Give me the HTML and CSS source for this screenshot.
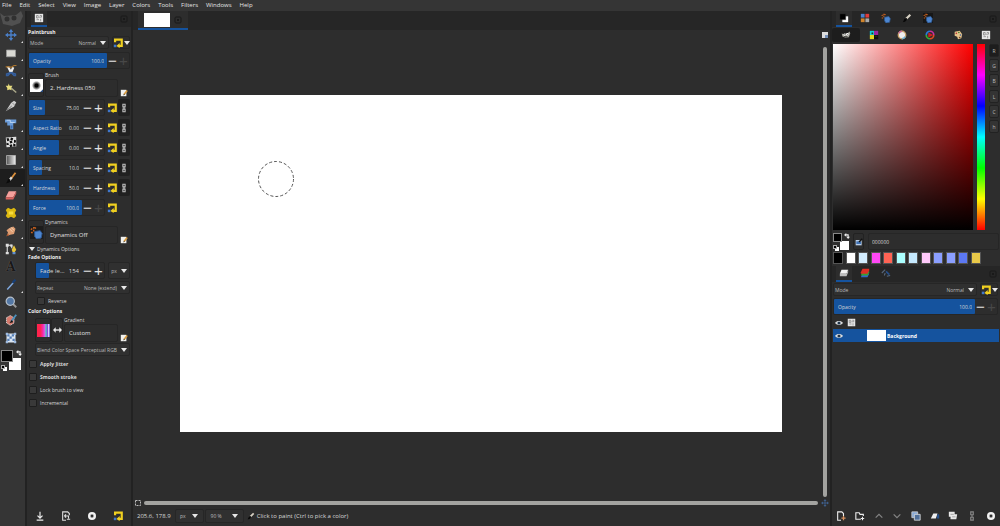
FILE: index.html
```html
<!DOCTYPE html>
<html lang="en">

<head>
    <meta charset="UTF-8">
    <meta name="viewport" content="width=device-width, initial-scale=1.0">
    <title>Image Editor</title>
    <link rel="stylesheet" href="styles.css">
</head>

<body>
    <!-- Icon sprite -->
    <svg class="sprite" aria-hidden="true">
        <defs>
            <linearGradient id="grayFade"><stop offset="0" stop-color="#555"/><stop offset="1" stop-color="#eee"/></linearGradient>
            <radialGradient id="softDot"><stop offset=".3" stop-color="#000"/><stop offset="1" stop-color="#fff"/></radialGradient>
        </defs>
        <symbol id="move" viewBox="0 0 16 16"><path d="M8 2v12M2 8h12" stroke="#4a7fc8" stroke-width="1.8"/><path d="M8 0l3 4H5zM8 16l3-4H5zM0 8l4-3v6zM16 8l-4-3v6z" fill="#4a7fc8"/></symbol>
        <symbol id="rect" viewBox="0 0 16 16"><path d="M2 4h12v9H2z" fill="#d9d9d4" stroke="#999"/></symbol>
        <symbol id="scissors" viewBox="0 0 16 16"><path d="M4 2l4 8M11 3L8 10" stroke="#eee" stroke-width="3"/><path d="M1 3c3-3 6 2 9-1s4 0 5-2" stroke="#a9742e" stroke-width="1.5" fill="none"/><path d="M8 10l-4 4H2v-2zM8 10l4 4h2v-2z" fill="none" stroke="#355f9e" stroke-width="1.8"/></symbol>
        <symbol id="wand" viewBox="0 0 16 16"><path d="M7 7l8 7" stroke="#aaa88a" stroke-width="2"/><path d="M5 2l1 3 4 0-2 3 1 3-3-1-3 1 0-3-2-3 3 0z" fill="#e8dc7c"/></symbol>
        <symbol id="crop" viewBox="0 0 16 16"><path d="M1 15L8 4l4-3 3 2-3 6-6 3z" fill="#d0d0d0"/><path d="M2 14l7-6" stroke="#555"/><path d="M10 4l3 3" stroke="#777"/></symbol>
        <symbol id="transform" viewBox="0 0 16 16"><path d="M0 2h15v5h-4v8H7v-5H3V6H0z" fill="#6b9bd8"/><path d="M2 3h5v3h6" stroke="#cfe1f7" fill="none"/><path d="M8 10h2v4H8z" fill="#3b6cb0"/></symbol>
        <symbol id="warp" viewBox="0 0 16 16"><path d="M1 2l14-1v13L2 15z" fill="#ddd"/><path d="M2 3h3l1 3-3 1zM8 2l3 1-1 3-3-1zM6 7l3-1 1 3-3 1zM12 5l3 1-1 3h-2zM2 9l3 1 0 2-3 0zM6 12l3-1 1 3-3 1zM11 10l3 1v3h-3z" fill="#111"/></symbol>
        <symbol id="gradient" viewBox="0 0 16 16"><path d="M2 2h12v12H2z" fill="url(#grayFade)" stroke="#bbb"/></symbol>
        <symbol id="brush" viewBox="0 0 16 16"><path d="M14 1L8 9" stroke="#d98e3c" stroke-width="2.4"/><path d="M9 7L6 11" stroke="#ddd" stroke-width="3"/><path d="M7 10c1 4-3 5-6 5 3-2 2-5 4-6z" fill="#0b0b0b"/></symbol>
        <symbol id="eraser" viewBox="0 0 16 16"><path d="M5 3h10l-4 8H1z" fill="#f5a09c"/><path d="M1 11h10l4-8v3l-4 8H1z" fill="#d9635f"/></symbol>
        <symbol id="heal" viewBox="0 0 16 16"><path d="M4 1l4 2 4-2 3 3-2 4 2 4-3 3-4-2-4 2-3-3 2-4-2-4z" fill="#dcb810"/><path d="M5 6h6v4H5z" fill="#f7dc3c"/></symbol>
        <symbol id="smudge" viewBox="0 0 16 16"><path d="M2 15l2-5-2-3 4-3 5-2 3 3-2 7-5 1z" fill="#dd9d73"/><path d="M6 5l4 4M8 3l4 4" stroke="#fae0c5"/><path d="M2 15l2-4 1 3z" fill="#a2471d"/></symbol>
        <symbol id="path" viewBox="0 0 16 16"><path d="M3 14V3h6v4" stroke="#ddd" stroke-width="1.5" fill="none"/><path d="M1 12h4v3H1zM1 1h4v4H1zM7 2h3v3H7z" fill="#ddd"/><path d="M12 3l3 6-2 3h-3L9 9z" fill="#e9c63a"/><path d="M10 12h4v3h-4z" fill="#6391cf"/></symbol>
        <symbol id="picker" viewBox="0 0 16 16"><path d="M3 14L11 5" stroke="#7fa8dd" stroke-width="2"/><path d="M10 5l4-4" stroke="#173f78" stroke-width="3"/></symbol>
        <symbol id="zoomTool" viewBox="0 0 16 16"><path d="M10 10l5 5" stroke="#999" stroke-width="2.4"/><circle cx="7" cy="7" r="5.5" fill="#5478a5" stroke="#b7c0cb" stroke-width="1.6"/></symbol>
        <symbol id="fgSelect" viewBox="0 0 16 16"><path d="M2 5l5-3 5 3 0 7-5 3-5-3z" fill="#d67a6d" stroke="#eee" stroke-dasharray="2 1"/><path d="M15 1L8 10" stroke="#4b90bd" stroke-width="2.5"/><path d="M6 12l3-4 2 3z" fill="#111"/></symbol>
        <symbol id="unified" viewBox="0 0 16 16"><path d="M2 2h12v12H2z" fill="#dbe6f3"/><path d="M3 3h3v3H3zM9 3h3v3H9zM6 6h3v3H6zM3 9h3v3H3zM10 9h3v3h-3z" fill="#557fb8"/><path d="M1 1h3v3H1zM12 1h3v3h-3zM1 12h3v3H1zM12 12h3v3h-3z" fill="#9fbbe0"/></symbol>
        <symbol id="swap" viewBox="0 0 8 8"><path d="M2 2.5h3.5V6" stroke="#eee" stroke-width="1.5" fill="none"/><path d="M0 2.5L3 0v5zM5.500 8L3 5h5z" fill="#eee"/></symbol>
        <symbol id="options" viewBox="0 0 12 12"><path d="M1 1h10v10H1z" fill="#e6e6e6"/><path d="M3 3h2v3H3zM7 3h2v2M3 8h3M8 7v3M6 5h3" stroke="#888" fill="none"/></symbol>
        <symbol id="close" viewBox="0 0 8 8"><rect x="1" y="1" width="6" height="6" rx="1" fill="none" stroke="#191919"/><path d="M3 3h2v2H3z" fill="#191919"/></symbol>
        <symbol id="reset" viewBox="0 0 12 12"><path d="M2.500 5V2h8v7.500H7" stroke="#f0d020" stroke-width="2.600" fill="none"/><path d="M8 6v6L4 9.500z" fill="#f0d020"/><path d="M1 8h3v3H1z" fill="#3f78cc"/></symbol>
        <symbol id="chain" viewBox="0 0 8 12"><path d="M2.500 1h3v3.500h-3zM2.500 7.500h3V11h-3zM4 4v4" stroke="#c4c4c4" stroke-width="1.400" fill="none"/></symbol>
        <symbol id="edit" viewBox="0 0 10 10"><path d="M1 1h7v8H1z" fill="#f1f1ee"/><path d="M9 2L5 7" stroke="#d99a3c" stroke-width="2"/><path d="M4 8l1-2 1 1z" fill="#222"/></symbol>
        <symbol id="softBrush" viewBox="0 0 14 14"><path d="M0 0h14v14H0z" fill="#fff"/><circle cx="7" cy="7" r="5" fill="url(#softDot)"/><path d="M14 11v3h-3z" fill="#25477c"/></symbol>
        <symbol id="dynamics" viewBox="0 0 14 14"><path d="M1 4l2-2M4 6V1l3 2M1 7h3" stroke="#c6601f" stroke-width="1.500" stroke-dasharray="2 1" fill="none"/><path d="M5 6l6-1 2 3-1 5-5 1-2-3z" fill="#4d86d0" stroke="#2f5a96"/></symbol>
        <symbol id="leftRight" viewBox="0 0 10 8"><path d="M2 4h6" stroke="#eee" stroke-width="1.500"/><path d="M0 4l3-3v6zM10 4L7 1v6z" fill="#eee"/></symbol>
        <symbol id="save" viewBox="0 0 12 12"><path d="M6 1v7M2 11h8M3 5.500l3 3 3-3" stroke="#eee" stroke-width="1.400" fill="none"/></symbol>
        <symbol id="restore" viewBox="0 0 12 12"><path d="M10 5V3L8 1H2v10h4M4 6h5v3M4 6l2-2M4 6l2 2M7 10h4" stroke="#ddd" stroke-width="1.300" fill="none"/></symbol>
        <symbol id="delete" viewBox="0 0 12 12"><circle cx="6" cy="6" r="4.800" fill="#f2f2f2"/><path d="M4.500 4.500l3 3M7.500 4.500l-3 3" stroke="#2b2b2b" stroke-width="1.500"/></symbol>
        <symbol id="quickmask" viewBox="0 0 8 8"><path d="M1.500 1.500h5v5h-5z" fill="none" stroke="#bbb" stroke-dasharray="2 1"/></symbol>
        <symbol id="corner" viewBox="0 0 8 8"><path d="M1 1h6v6H1z" fill="#ddd"/><path d="M4 4h3v3H4z" fill="#7590b8"/></symbol>
        <symbol id="colors" viewBox="0 0 12 12"><path d="M4 4h7v7H4z" fill="#fff"/><path d="M1 1h7v7H1z" fill="#000" stroke="#333" stroke-width=".5"/></symbol>
        <symbol id="palette" viewBox="0 0 12 12"><path d="M1 1h4.500v4.500H1z" fill="#4b82ce"/><path d="M6.500 1H11v4.500H6.500z" fill="#dd3b3b"/><path d="M1 6.500h4.500V11H1z" fill="#d0842b"/><path d="M6.500 6.500H11V11H6.500z" fill="#a9a9a9"/></symbol>
        <symbol id="inkBrush" viewBox="0 0 12 12"><path d="M10 2L5 7" stroke="#d8d2c4" stroke-width="2.600"/><path d="M6 6c0 4-3 5-5 5l2-4z" fill="#080808"/></symbol>
        <symbol id="wilber" viewBox="0 0 14 10"><path d="M1 3l3 1 6-2 2-2 1 3-2 5-5 1-4-2z" fill="#a4a49c"/><circle cx="5" cy="4.500" r="1.500" fill="#fff"/><circle cx="9" cy="4" r="1.700" fill="#fff"/><path d="M5 4h1v1H5zM9 4h1v1H9zM4 7h5v1H4z" fill="#111"/></symbol>
        <symbol id="cmyk" viewBox="0 0 12 12"><path d="M1 1h5v5H1z" fill="#16c7d8"/><path d="M6 1h5v5H6z" fill="#9a25a0"/><path d="M1 6h5v5H1z" fill="#e0d81c"/><path d="M6 6h5v5H6z" fill="#111"/><path d="M3 3h2v2H3zM7 7h3v1H7z" fill="#173d20"/></symbol>
        <symbol id="watercolor" viewBox="0 0 12 12"><circle cx="6" cy="6" r="4.500" fill="#eee" stroke="#c9a268" stroke-width="1.600"/><path d="M2 4a4.500 4.500 0 0 1 4-2.500" stroke="#c66c9a" stroke-width="1.600" fill="none"/><path d="M10 8a4.500 4.500 0 0 1-4 2.500" stroke="#6aaed0" stroke-width="1.600" fill="none"/></symbol>
        <symbol id="wheel" viewBox="0 0 12 12"><g fill="none" stroke-width="2"><path d="M6 1.500A4.500 4.500 0 0 1 10.500 6" stroke="#c92ea0"/><path d="M10.500 6A4.500 4.500 0 0 1 6 10.500" stroke="#e34b20"/><path d="M6 10.500A4.500 4.500 0 0 1 1.500 6" stroke="#36ae34"/><path d="M1.500 6A4.500 4.500 0 0 1 6 1.500" stroke="#2a78d8"/></g><path d="M4 3l6 3-6 3z" fill="#d12222"/></symbol>
        <symbol id="paints" viewBox="0 0 12 12"><path d="M2 2l6-1 3 4-1 5-4 1-1-3-3-1z" fill="#e5c48b"/><circle cx="4" cy="4" r="1" fill="#b83030"/><circle cx="7" cy="3" r="1" fill="#487a2e"/><circle cx="9" cy="6" r="1" fill="#3a5fa0"/><circle cx="8" cy="9" r="1" fill="#7b3f1f"/></symbol>
        <symbol id="layers" viewBox="0 0 12 12"><path d="M3 2h8l-2 5H1z" fill="#f2f2f2"/><path d="M1 7h8l2-5v3L9 10H1z" fill="#bdbdbd"/></symbol>
        <symbol id="channels" viewBox="0 0 12 12"><path d="M3 7h8l-2 4H1z" fill="#3267c5"/><path d="M3 4h8v2L9 9H1z" fill="#38a030"/><path d="M3 1h8v2L9 7H1V5z" fill="#df2e25"/></symbol>
        <symbol id="paths" viewBox="0 0 12 12"><path d="M1 6l4-4M4 9l1-3M7 10l4-1" stroke="#58687c" stroke-width="1.300" fill="none"/><path d="M6 4l4 4" stroke="#264f8b" stroke-width="2"/></symbol>
        <symbol id="toPalette" viewBox="0 0 12 12"><path d="M1 3h9v8H1z" fill="#b9cde6"/><path d="M2 5h7v4H2z" fill="#3f72b5"/><path d="M11 1L6 6" stroke="#111" stroke-width="2"/></symbol>
        <symbol id="eye" viewBox="0 0 12 8"><path d="M0 4c3-4 9-4 12 0-3 4-9 4-12 0z" fill="#dedede"/><circle cx="6" cy="4" r="2.400" fill="#34516f"/><circle cx="6" cy="4" r="1" fill="#000"/></symbol>
        <symbol id="newLayer" viewBox="0 0 12 12"><path d="M9 6V3L7 1H2v10h4" stroke="#eee" stroke-width="1.300" fill="none"/><path d="M9 6v5M6.500 8.500h5" stroke="#d7925f" stroke-width="1.500"/></symbol>
        <symbol id="newGroup" viewBox="0 0 12 12"><path d="M7 10H1V2h4l1 2h4v2M9 7v4M7 9h4" stroke="#eee" stroke-width="1.300" fill="none"/></symbol>
        <symbol id="raise" viewBox="0 0 12 12"><path d="M2 8l4-4 4 4" stroke="#858585" stroke-width="1.400" fill="none"/></symbol>
        <symbol id="lower" viewBox="0 0 12 12"><path d="M2 4l4 4 4-4" stroke="#858585" stroke-width="1.400" fill="none"/></symbol>
        <symbol id="duplicate" viewBox="0 0 12 12"><path d="M1 1h7v7H1z" fill="#87a9d6" stroke="#ccc"/><path d="M4 4h7v7H4z" fill="#506f99" stroke="#ddd"/></symbol>
        <symbol id="merge" viewBox="0 0 12 12"><path d="M4 3h5L7 9H1z" fill="#eee"/><path d="M9 4h2v5H8z" fill="#244f8c"/></symbol>
        <symbol id="mask" viewBox="0 0 12 12"><path d="M1 1h7v3h3l-1 6H3V7H1z" fill="#e8e8e8"/><path d="M3 4h4M5 7h4" stroke="#999"/></symbol>
    </svg>

    <nav class="menubar">
        <a href="#">File</a><a href="#">Edit</a><a href="#">Select</a><a href="#">View</a><a href="#">Image</a><a href="#">Layer</a><a href="#">Colors</a><a href="#">Tools</a><a href="#">Filters</a><a href="#">Windows</a><a href="#">Help</a>
    </nav>

    <main class="workspace">
        <!-- Toolbox -->
        <aside class="toolbox">
            <svg class="mascot" viewBox="0 0 24 15"><path d="M0 2l4 3 12-1 5-4 2 5-3 7-8 3-9-2z" fill="#505050"/><circle cx="7" cy="8" r="2.500" fill="#303030"/><circle cx="14" cy="7" r="2.500" fill="#303030"/></svg>
            <div class="tools">
                <button class="tool more" aria-label="Move"><svg><use href="#move"/></svg></button>
                <button class="tool more" aria-label="Rectangle Select"><svg><use href="#rect"/></svg></button>
                <button class="tool more" aria-label="Scissors Select"><svg><use href="#scissors"/></svg></button>
                <button class="tool more" aria-label="Fuzzy Select"><svg><use href="#wand"/></svg></button>
                <button class="tool" aria-label="Crop"><svg><use href="#crop"/></svg></button>
                <button class="tool more" aria-label="Transform"><svg><use href="#transform"/></svg></button>
                <button class="tool more" aria-label="Warp"><svg><use href="#warp"/></svg></button>
                <button class="tool more" aria-label="Gradient"><svg><use href="#gradient"/></svg></button>
                <button class="tool more active" aria-label="Paintbrush"><svg><use href="#brush"/></svg></button>
                <button class="tool" aria-label="Eraser"><svg><use href="#eraser"/></svg></button>
                <button class="tool more" aria-label="Heal"><svg><use href="#heal"/></svg></button>
                <button class="tool more" aria-label="Smudge"><svg><use href="#smudge"/></svg></button>
                <button class="tool" aria-label="Paths"><svg><use href="#path"/></svg></button>
                <button class="tool text-tool" aria-label="Text">A</button>
                <button class="tool more" aria-label="Color Picker"><svg><use href="#picker"/></svg></button>
                <button class="tool" aria-label="Zoom"><svg><use href="#zoomTool"/></svg></button>
                <button class="tool" aria-label="Foreground Select"><svg><use href="#fgSelect"/></svg></button>
                <button class="tool" aria-label="Unified Transform"><svg><use href="#unified"/></svg></button>
            </div>
            <div class="fg-bg">
                <button class="bg" aria-label="Background color"></button>
                <button class="fg" aria-label="Foreground color"></button>
                <button class="swap" aria-label="Swap colors"><svg><use href="#swap"/></svg></button>
                <button class="default" aria-label="Default colors"></button>
            </div>
        </aside>

        <!-- Tool options -->
        <section class="dock options">
            <div class="tabs">
                <button class="tab active" aria-label="Tool Options"><svg><use href="#options"/></svg></button>
                <button class="tab-close" aria-label="Configure tab"><svg><use href="#close"/></svg></button>
            </div>
            <div class="option-body">
                <h2>Paintbrush</h2>
                <div class="row mode-row">
                    <div class="combo"><label for="mode">Mode</label><select id="mode"><option>Normal</option></select></div>
                    <button class="reset wide" aria-label="Mode group"><svg><use href="#reset"/></svg><i class="arrow"></i></button>
                </div>
                <div class="spin full">
                    <div class="track"><div class="fill" style="width: 100%"></div><label for="opacity">Opacity</label><input id="opacity" value="100.0"></div>
                    <button>−</button><button class="off">+</button>
                </div>
                <div class="resource">
                    <button class="preview" aria-label="Choose brush"><svg><use href="#softBrush"/></svg></button>
                    <div class="field"><label for="brushName">Brush</label><input id="brushName" value="2. Hardness 050"></div>
                    <button class="edit" aria-label="Edit brush"><svg><use href="#edit"/></svg></button>
                </div>
                <div class="sliders" id="sliders"></div>
                <div class="resource">
                    <button class="preview dark" aria-label="Choose dynamics"><svg><use href="#dynamics"/></svg></button>
                    <div class="field"><label for="dynName">Dynamics</label><input id="dynName" value="Dynamics Off"></div>
                    <button class="edit" aria-label="Edit dynamics"><svg><use href="#edit"/></svg></button>
                </div>
                <button class="expander"><i class="arrow"></i>Dynamics Options</button>
                <h2>Fade Options</h2>
                <div class="row indent fade-row">
                    <div class="spin large">
                        <div class="track"><div class="fill" style="width: 28%"></div><label for="fade">Fade le...</label><input id="fade" value="154"></div>
                        <button>−</button><button>+</button>
                    </div>
                    <div class="combo unit"><select aria-label="Fade unit"><option>px</option></select></div>
                </div>
                <div class="combo indent"><label for="repeat">Repeat</label><select id="repeat"><option>None (extend)</option></select></div>
                <label class="check indent"><input type="checkbox">Reverse</label>
                <h2>Color Options</h2>
                <div class="resource indent">
                    <button class="preview" aria-label="Choose gradient"><span class="gradient-preview"></span></button>
                    <button class="preview flip" aria-label="Reverse gradient"><svg><use href="#leftRight"/></svg></button>
                    <div class="field"><label for="gradName">Gradient</label><input id="gradName" value="Custom"></div>
                    <button class="edit" aria-label="Edit gradient"><svg><use href="#edit"/></svg></button>
                </div>
                <div class="combo indent blend"><label for="blend">Blend Color Space</label><select id="blend"><option>Perceptual RGB</option></select></div>
                <div class="checks">
                    <label class="check bold"><input type="checkbox">Apply Jitter</label>
                    <label class="check bold"><input type="checkbox">Smooth stroke</label>
                    <label class="check"><input type="checkbox">Lock brush to view</label>
                    <label class="check"><input type="checkbox">Incremental</label>
                </div>
            </div>
            <div class="dock-footer">
                <button aria-label="Save preset"><svg><use href="#save"/></svg></button>
                <button aria-label="Restore preset"><svg><use href="#restore"/></svg></button>
                <button aria-label="Delete preset"><svg><use href="#delete"/></svg></button>
                <button aria-label="Reset"><svg><use href="#reset"/></svg></button>
            </div>
        </section>

        <!-- Image window -->
        <section class="editor">
            <div class="image-tabs">
                <div class="image-tab"><span class="thumb"></span><button class="tab-close" aria-label="Close image"><svg><use href="#close"/></svg></button></div>
            </div>
            <div class="view">
                <div class="canvas-area">
                    <div class="paper">
                        <svg class="brush-outline" viewBox="0 0 38 38"><circle cx="19" cy="19" r="17.500" fill="none" stroke="#555" stroke-dasharray="3 2"/></svg>
                    </div>
                </div>
                <div class="v-scroll"><svg><use href="#corner"/></svg><div class="bar"></div></div>
                <svg class="quickmask"><use href="#quickmask"/></svg>
                <div class="h-scroll"><div class="bar"></div></div>
                <svg class="navigate"><use href="#move"/></svg>
            </div>
            <div class="statusbar">
                <span class="position">205.6, 178.9</span>
                <div class="combo unit"><select aria-label="Unit"><option>px</option></select></div>
                <div class="combo zoom"><select aria-label="Zoom"><option>90 %</option></select></div>
                <svg><use href="#inkBrush"/></svg>
                <span>Click to paint (Ctrl to pick a color)</span>
            </div>
        </section>

        <!-- Colors and layers -->
        <section class="dock side">
            <div class="tabs">
                <button class="tab active" aria-label="Colors"><svg><use href="#colors"/></svg></button>
                <button class="tab" aria-label="Palettes"><svg><use href="#palette"/></svg></button>
                <button class="tab" aria-label="Dynamics"><svg><use href="#dynamics"/></svg></button>
                <button class="tab" aria-label="Brushes"><svg><use href="#inkBrush"/></svg></button>
                <button class="tab dark" aria-label="Dynamics Editor"><svg><use href="#dynamics"/></svg></button>
                <button class="tab-close" aria-label="Configure tab"><svg><use href="#close"/></svg></button>
            </div>
            <div class="selectors">
                <button class="active" aria-label="GIMP"><svg><use href="#wilber"/></svg></button>
                <button aria-label="CMYK"><svg><use href="#cmyk"/></svg></button>
                <button aria-label="Watercolor"><svg><use href="#watercolor"/></svg></button>
                <button aria-label="Wheel"><svg><use href="#wheel"/></svg></button>
                <button aria-label="Palette"><svg><use href="#paints"/></svg></button>
                <button aria-label="Scales"><svg><use href="#options"/></svg></button>
            </div>
            <div class="picker">
                <div class="plane"></div>
                <div class="hue"></div>
                <div class="channels">
                    <button class="active">R</button><button>G</button><button>B</button>
                    <button class="second">L</button><button>C</button><button>h</button>
                </div>
            </div>
            <div class="hex-row">
                <div class="fg-bg small">
                    <button class="bg" aria-label="Background color"></button>
                    <button class="fg" aria-label="Foreground color"></button>
                    <button class="swap" aria-label="Swap colors"><svg><use href="#swap"/></svg></button>
                    <button class="default" aria-label="Default colors"></button>
                </div>
                <button class="to-palette" aria-label="Add to palette"><svg><use href="#toPalette"/></svg></button>
                <input class="hex" aria-label="HTML notation" value="000000">
            </div>
            <div class="history" id="history"></div>
            <div class="tabs layer-tabs">
                <button class="tab active" aria-label="Layers"><svg><use href="#layers"/></svg></button>
                <button class="tab" aria-label="Channels"><svg><use href="#channels"/></svg></button>
                <button class="tab" aria-label="Paths"><svg><use href="#paths"/></svg></button>
                <button class="tab-close" aria-label="Configure tab"><svg><use href="#close"/></svg></button>
            </div>
            <div class="layer-options">
                <div class="row">
                    <div class="combo"><label for="layerMode">Mode</label><select id="layerMode"><option>Normal</option></select></div>
                    <button class="reset wide" aria-label="Mode group"><svg><use href="#reset"/></svg><i class="arrow"></i></button>
                </div>
                <div class="spin full">
                    <div class="track"><div class="fill" style="width: 100%"></div><label for="layerOpacity">Opacity</label><input id="layerOpacity" value="100.0"></div>
                    <button>−</button><button class="off">+</button>
                </div>
            </div>
            <div class="layer-list">
                <div class="layer-head"><svg><use href="#eye"/></svg><svg class="lock"><use href="#options"/></svg></div>
                <div class="layer selected"><svg><use href="#eye"/></svg><span class="thumb"></span><b>Background</b></div>
            </div>
            <div class="dock-footer">
                <button aria-label="New layer"><svg><use href="#newLayer"/></svg></button>
                <button aria-label="New group"><svg><use href="#newGroup"/></svg></button>
                <button aria-label="Raise"><svg><use href="#raise"/></svg></button>
                <button aria-label="Lower"><svg><use href="#lower"/></svg></button>
                <button aria-label="Duplicate"><svg><use href="#duplicate"/></svg></button>
                <button aria-label="Merge"><svg><use href="#merge"/></svg></button>
                <button aria-label="Mask"><svg><use href="#mask"/></svg></button>
                <button class="dim" aria-label="Anchor"><svg><use href="#chain"/></svg></button>
                <button aria-label="Delete"><svg><use href="#delete"/></svg></button>
            </div>
        </section>
    </main>

    <script src="script.js"></script>
</body>

</html>
```
FILE: styles.css
```css
* {
    margin: 0;
    padding: 0;
    box-sizing: border-box;
}

body {
    height: 100vh;
    display: flex;
    flex-direction: column;
    overflow: hidden;
    background: #2d2d2d;
    color: #d8d8d8;
    font-family: 'Open Sans', 'Noto Sans', sans-serif;
    font-size: 5px;
    line-height: 8px;
}

button,
input,
select {
    font: inherit;
    color: inherit;
    background: none;
    border: none;
    outline: none;
    min-width: 0;
}

button {
    display: flex;
    align-items: center;
    justify-content: center;
}

svg {
    display: block;
    flex: none;
    width: 10px;
    height: 10px;
}

.sprite {
    position: absolute;
    width: 0;
    height: 0;
}

.menubar {
    display: flex;
    gap: 8px;
    height: 11px;
    padding: 1px 2px;
    background: #353535;
    font-size: 6px;
}

.menubar a {
    color: #e4e4e4;
    text-decoration: none;
}

.workspace {
    flex: 1;
    min-height: 0;
    display: flex;
}

.arrow,
.combo::after {
    content: '';
    flex: none;
    border: 3px solid transparent;
    border-top: 4px solid #e8e8e8;
    border-bottom: 0;
}

/* Toolbox */
.toolbox {
    flex: none;
    width: 25px;
    background: #353535;
}

.mascot {
    width: 24px;
    height: 15px;
}

.tools {
    display: grid;
    grid-auto-rows: 1fr;
    height: 321px;
}

.tool {
    position: relative;
    padding-right: 3px;
}

.tool svg {
    width: 12px;
    height: 12px;
}

.tool.active {
    background: #1d1d1d;
}

.tool.more::after {
    content: '';
    position: absolute;
    right: 2px;
    bottom: 1px;
    border-left: 2px solid transparent;
    border-bottom: 2px solid #ddd;
}

.text-tool {
    color: #181818;
    font: bold 12px/14px 'DejaVu Serif', serif;
    text-shadow: 0 0 1px #777;
}

.fg-bg {
    position: relative;
    width: 22px;
    height: 20px;
    margin-top: 3px;
}

.fg-bg button {
    position: absolute;
}

.fg-bg .fg {
    left: 1px;
    top: 0;
    width: 12px;
    height: 12px;
    background: #000;
    border: 1px solid #888;
}

.fg-bg .bg {
    right: 1px;
    bottom: 0;
    width: 12px;
    height: 12px;
    background: #fff;
}

.fg-bg .swap {
    right: 0;
    top: 0;
}

.fg-bg .swap svg {
    width: 6px;
    height: 6px;
}

.fg-bg .default {
    left: 1px;
    bottom: 1px;
    width: 4px;
    height: 4px;
    background: #000;
    border: 1px solid #aaa;
    box-shadow: 2px 2px 0 #fff;
}

.fg-bg.small {
    width: 18px;
    height: 17px;
    margin: 0;
}

.small .fg,
.small .bg {
    width: 9px;
    height: 9px;
}

/* Docks */
.dock {
    flex: none;
    display: flex;
    flex-direction: column;
    border-left: 2px solid #222;
}

.options {
    width: 106px;
}

.side {
    width: 170px;
}

.tabs {
    flex: none;
    display: flex;
    height: 16px;
    padding-left: 4px;
    background: #262626;
}

.tab {
    width: 16px;
    border-bottom: 2px solid transparent;
}

.tab.active {
    background: #2d2d2d;
    border-color: #15539e;
}

.side .tabs {
    gap: 5px;
}

.tab.dark svg {
    background: #171717;
}

.tab-close {
    margin-left: auto;
    padding-right: 3px;
}

.tab-close svg {
    width: 8px;
    height: 8px;
}

.option-body {
    flex: 1;
    min-height: 0;
    display: flex;
    flex-direction: column;
    padding: 1px 1px 0 1px;
}

h2 {
    color: #eee;
    font-size: 5px;
    line-height: 8px;
    font-weight: 700;
}

.row {
    display: flex;
    gap: 3px;
}

.combo {
    flex: 1;
    display: flex;
    align-items: center;
    height: 13px;
    padding: 0 2px 0 1px;
    border: 1px solid #262626;
    border-radius: 2px;
    background: #303030;
    color: #bbb;
}

.option-body > .combo {
    flex: none;
    margin-top: 2px;
}

.option-body > .blend {
    margin-top: 1px;
}

.combo label {
    flex: none;
    white-space: nowrap;
}

.combo select {
    flex: 1;
    margin-right: 4px;
    appearance: none;
    text-align: right;
    text-align-last: right;
}

.mode-row {
    margin-bottom: 3px;
}

.reset.wide {
    width: 18px;
    gap: 1px;
    border: 1px solid #262626;
    border-radius: 2px;
}

.indent {
    margin-left: 7px;
}

.spin {
    display: flex;
    width: 77px;
    height: 17px;
    padding: 0;
    border: 1px solid #262626;
    border-radius: 2px;
}

.spin.full {
    width: auto;
}

.track {
    position: relative;
    flex: 1;
    display: flex;
    align-items: center;
    padding: 0 3px 0 4px;
}

.fill {
    position: absolute;
    inset: 0 auto 0 0;
    background: #15539e;
    border-radius: 1px;
}

.track label,
.track input {
    position: relative;
    white-space: nowrap;
}

.track input {
    flex: 1;
    width: 0;
    text-align: right;
}

.spin button {
    width: 11px;
    color: #e2e2e2;
    font: 15px/12px 'Liberation Sans', sans-serif;
}

.spin .off {
    color: #484848;
}

.spin.large {
    flex: 1;
    font-size: 6px;
}

.resource {
    display: flex;
    align-items: flex-end;
    height: 25px;
    margin-top: 3px;
}

.resource.indent {
    margin-top: 2px;
}

.preview {
    flex: none;
    width: 16px;
    height: 24px;
    border: 1px solid #242424;
    border-radius: 2px;
}

.preview.dark svg {
    background: #1d1d1d;
}

.preview svg {
    width: 13px;
    height: 13px;
}

.preview.flip {
    width: 12px;
}

.preview.flip svg {
    width: 9px;
    height: 8px;
}

.gradient-preview {
    width: 13px;
    height: 13px;
    background: linear-gradient(90deg, #ff234d 0 25%, #f928a5 45%, #cf62ec 60%, #4ed0b5 70%, #7c44d8 80%, #e5e5ff 90%, #4527b5);
}

.field {
    flex: 1;
    min-width: 0;
    margin-left: 1px;
}

.field label {
    display: block;
    height: 7px;
    line-height: 7px;
}

.field input {
    display: block;
    width: 100%;
    height: 18px;
    padding-left: 4px;
    border: 1px solid #262626;
    border-radius: 2px;
    color: #e2e2e2;
    font-size: 6px;
}

.edit {
    width: 12px;
    height: 9px;
}

.edit svg {
    width: 8px;
    height: 8px;
}

.sliders {
    display: flex;
    flex-direction: column;
    gap: 3px;
    margin-top: 2px;
}

.slider-row {
    display: flex;
    align-items: center;
}

.slider-row .reset {
    width: 13px;
}

.slider-row .chain {
    width: 12px;
    height: 17px;
    background: #202020;
    border-radius: 2px;
}

.chain svg {
    width: 6px;
    height: 10px;
}

.expander {
    justify-content: flex-start;
    gap: 2px;
    margin-top: 1px;
    padding-left: 1px;
}

.fade-row {
    margin-top: 1px;
}

.combo.unit {
    flex: none;
    width: 22px;
    height: auto;
}

.check {
    display: flex;
    align-items: center;
    gap: 3px;
    height: 8px;
}

.check.indent {
    margin: 3px 0 2px 9px;
}

.check.bold {
    font-weight: 700;
}

.check input {
    appearance: none;
    width: 8px;
    height: 8px;
    border: 1px solid #1e1e1e;
    border-radius: 1px;
    background: #393939;
}

.checks {
    display: flex;
    flex-direction: column;
    gap: 5px;
    margin: 4px 0 0 1px;
}

.dock-footer {
    flex: none;
    display: flex;
    justify-content: space-around;
    align-items: center;
    height: 18px;
    padding-bottom: 2px;
}

.dock-footer .dim {
    opacity: 0.6;
}

/* Image window */
.editor {
    flex: 1;
    min-width: 0;
    display: flex;
    flex-direction: column;
    border-left: 2px solid #222;
}

.image-tabs {
    display: flex;
    height: 19px;
    padding-left: 5px;
    background: #262626;
}

.image-tab {
    display: flex;
    align-items: center;
    width: 50px;
    padding: 0 3px 0 6px;
    background: #2d2d2d;
    border-bottom: 2px solid #15539e;
}

.image-tab .thumb {
    width: 26px;
    height: 14px;
    background: #fff;
}

.view {
    flex: 1;
    min-height: 0;
    display: grid;
    grid-template-columns: 10px 1fr 11px;
    grid-template-rows: 1fr 12px;
}

.canvas-area {
    grid-column: 2;
    display: grid;
    place-items: center;
}

.paper {
    position: relative;
    width: 89%;
    aspect-ratio: 601 / 337;
    background: #fff;
}

.brush-outline {
    position: absolute;
    left: 77px;
    top: 65px;
    width: 38px;
    height: 38px;
}

.v-scroll {
    display: flex;
    flex-direction: column;
    align-items: center;
    gap: 8px;
    padding-top: 1px;
}

.v-scroll svg,
.quickmask,
.navigate {
    width: 8px;
    height: 8px;
}

.quickmask,
.navigate {
    place-self: center;
}

.navigate {
    opacity: 0.6;
}

.bar {
    flex: 1;
    background: #a3a3a0;
    border-radius: 2px;
}

.v-scroll .bar {
    width: 4px;
}

.h-scroll {
    display: flex;
    padding: 4px 1px;
}

.statusbar {
    flex: none;
    display: flex;
    align-items: center;
    height: 17px;
    padding: 0 5px 3px 4px;
    font-size: 6px;
}

.statusbar .combo {
    flex: none;
    height: 14px;
    padding-right: 5px;
    font-size: 5px;
}

.statusbar .combo.unit {
    width: 29px;
    margin: 0 1px 0 4px;
}

.statusbar .combo.zoom {
    width: 39px;
    margin-right: 3px;
}

.statusbar .unit select {
    margin-right: 6px;
}

.statusbar .zoom select {
    margin-right: 10px;
}

.statusbar svg {
    width: 8px;
    height: 8px;
    margin-right: 2px;
}

/* Color selector */
.selectors {
    flex: none;
    display: grid;
    grid-template-columns: repeat(6, 1fr);
    height: 15px;
    padding-top: 1px;
}

.selectors .active {
    background: #1d1d1d;
    border-radius: 2px;
}

.picker {
    flex: none;
    display: flex;
    gap: 4px;
    height: 188px;
    padding: 2px 1px 0 1px;
}

.plane {
    flex: 1;
    background: linear-gradient(to top, #000, transparent), linear-gradient(to right, #fff, #f00);
}

.hue {
    width: 8px;
    background: linear-gradient(#f00, #f0f, #00f, #0ff, #0f0, #ff0, #f00);
}

.channels {
    display: flex;
    flex-direction: column;
    gap: 2px;
}

.channels button {
    width: 10px;
    height: 13px;
    border: 1px solid #222;
    border-radius: 2px;
    background: #343434;
    color: #bbb;
}

.channels .active {
    background: #1d1d1d;
}

.channels .second {
    margin-top: 1px;
}

.hex-row {
    flex: none;
    display: flex;
    gap: 3px;
    height: 22px;
    padding: 3px 1px 2px 0;
}

.to-palette {
    width: 11px;
    border: 1px solid #222;
    border-radius: 2px;
}

.to-palette svg {
    width: 8px;
    height: 8px;
}

.hex {
    flex: 1;
    margin-left: 1px;
    padding-left: 3px;
    border: 1px solid #262626;
    border-radius: 2px;
}

.history {
    flex: none;
    display: grid;
    grid-template-columns: repeat(12, 1fr);
    height: 12px;
    padding: 0 17px 0 1px;
}

.history button {
    width: 10px;
    height: 12px;
    border: 1px solid #555;
}

.layer-tabs {
    margin-top: 2px;
}

.layer-options {
    display: flex;
    flex-direction: column;
    gap: 2px;
    padding: 1px 2px 1px 1px;
}

.layer-list {
    flex: 1;
}

.layer-head,
.layer {
    display: flex;
    align-items: center;
    height: 13px;
    margin: 0 1px;
    padding-left: 2px;
}

.layer-head svg,
.layer svg {
    width: 8px;
    height: 6px;
}

.layer-head .lock {
    width: 9px;
    height: 9px;
    margin-left: 4px;
}

.layer.selected {
    background: #15539e;
    color: #fff;
}

.layer .thumb {
    width: 19px;
    height: 11px;
    margin: 0 1px 0 24px;
    background: #fff;
}
```
FILE: script.js
```js
const sliders = [
    { id: 'size', label: 'Size', value: '75.00', fill: 30, linked: true },
    { id: 'aspect', label: 'Aspect Ratio', value: '0.00', fill: 57, linked: true },
    { id: 'angle', label: 'Angle', value: '0.00', fill: 57, linked: true },
    { id: 'spacing', label: 'Spacing', value: '10.0', fill: 24, linked: true },
    { id: 'hardness', label: 'Hardness', value: '50.0', fill: 57, linked: true },
    { id: 'force', label: 'Force', value: '100.0', fill: 100, linked: false }
];

document.getElementById('sliders').innerHTML = sliders.map(s => `
    <div class="slider-row">
        <div class="spin">
            <div class="track"><div class="fill" style="width: ${s.fill}%"></div><label for="${s.id}">${s.label}</label><input id="${s.id}" value="${s.value}"></div>
            <button>−</button><button class="${s.fill === 100 ? 'off' : ''}">+</button>
        </div>
        <button class="reset" aria-label="Reset ${s.label}"><svg><use href="#reset"/></svg></button>
        ${s.linked ? `<button class="chain" aria-label="Link ${s.label}"><svg><use href="#chain"/></svg></button>` : ''}
    </div>`).join('');

// Recently used colors
const colors = ['#000000', '#ffffff', '#d2edff', '#ff48f5', '#ff6454', '#abffff', '#c6eaff', '#ffcafa', '#8b9fff', '#8b9fff', '#5c78f2', '#e9c949'];

document.getElementById('history').innerHTML = colors
    .map(c => `<button aria-label="${c}" style="background: ${c}"></button>`)
    .join('');
```
